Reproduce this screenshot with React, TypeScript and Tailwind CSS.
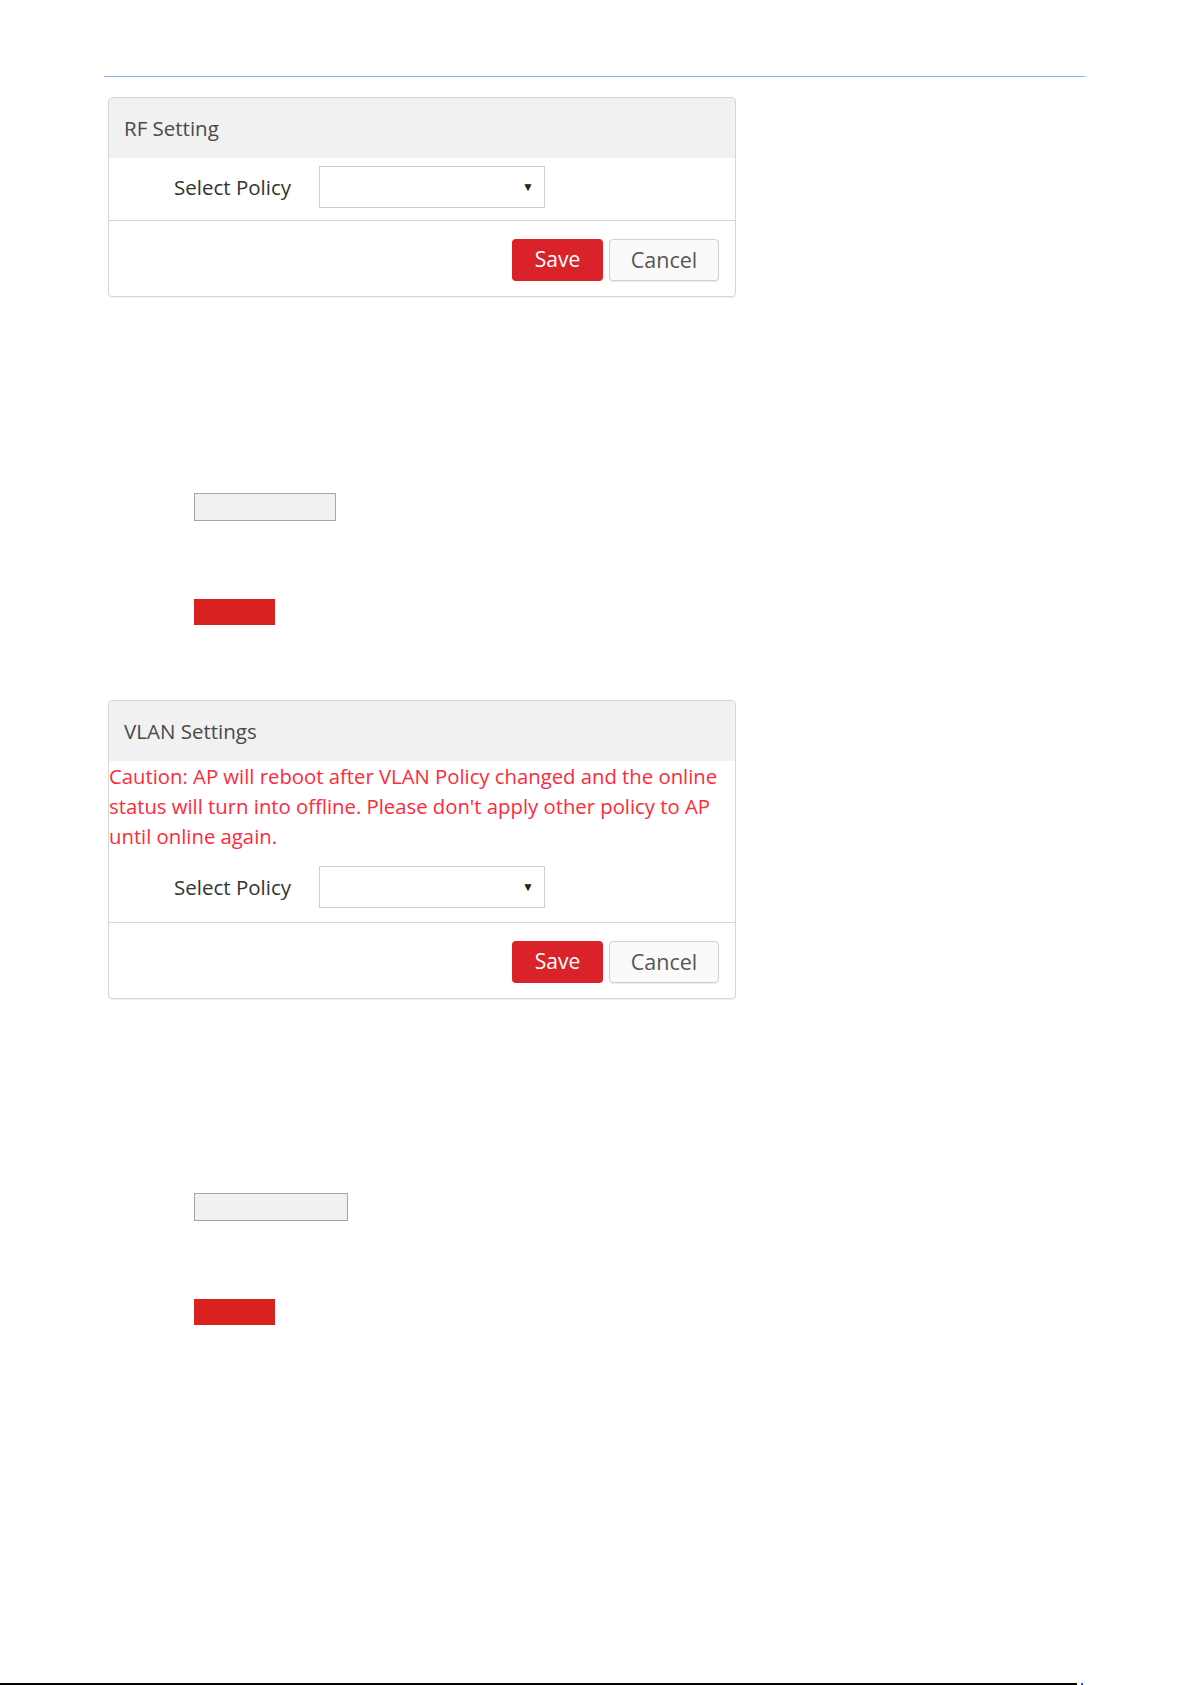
import React from 'react';

const font = { fontFamily: '"Open Sans", "Noto Sans", sans-serif' };

function PolicySelect() {
  return (
    <div className="relative w-[226px] h-[42px] border border-[#cfcfcf] bg-white">
      <span className="absolute right-[10px] top-[11px] text-[12px] text-[#222]">▼</span>
    </div>
  );
}

function Panel({ title, caution }: { title: string; caution?: boolean }) {
  return (
    <div className="ml-[108px] w-[628px] border border-[#d6d6d6] rounded-[4px] overflow-hidden shadow-[0_1px_1px_rgba(0,0,0,0.06)]">
      <div className="h-[60px] bg-[#f1f1f1] flex items-center px-[15px] text-[20.5px] text-[#4a4a4a]">
        {title}
      </div>
      {caution && (
        <div className="text-[20.3px] leading-[30px] text-[#ff2a3a] whitespace-nowrap">
          Caution: AP will reboot after VLAN Policy changed and the online
          <br />
          status will turn into offline. Please don't apply other policy to AP
          <br />
          until online again.
        </div>
      )}
      <div className={`flex items-center ${caution ? 'pt-[15px] pb-[14px]' : 'pt-[8px] pb-[12px]'}`}>
        <div className="w-[182px] text-right text-[20.5px] text-[#333]">Select Policy</div>
        <div className="ml-[28px]">
          <PolicySelect />
        </div>
      </div>
      <div className="border-t border-[#d6d6d6] flex justify-end gap-[6px] pt-[18px] pb-[15px] pr-[16px]">
        <button className="w-[91px] h-[42px] rounded-[4px] bg-[#d9222a] text-white text-[21px]">Save</button>
        <button className="w-[110px] h-[42px] rounded-[4px] bg-[#fafafa] border border-[#d0d0d0] text-[#555] text-[21.5px] shadow-[0_1px_1px_rgba(0,0,0,0.08)]">
          Cancel
        </button>
      </div>
    </div>
  );
}

export default function App() {
  return (
    <div className="w-[1192px] h-[1685px] bg-white overflow-hidden" style={font}>
      <div className="pt-[76px]">
        <div className="ml-[104px] w-[981px] h-px bg-[#80b3e8]" />
      </div>
      <div className="mt-[20px]">
        <Panel title="RF Setting" />
      </div>
      <div className="ml-[194px] mt-[196px] w-[142px] h-[28px] border border-[#a6a6a6] bg-[#f1f1f1]" />
      <div className="ml-[194px] mt-[78px] w-[81px] h-[26px] bg-[#d92120]" />
      <div className="mt-[75px]">
        <Panel title="VLAN Settings" caution />
      </div>
      <div className="ml-[194px] mt-[194px] w-[154px] h-[28px] border border-[#a6a6a6] bg-[#f1f1f1]" />
      <div className="ml-[194px] mt-[78px] w-[81px] h-[26px] bg-[#d92120]" />
      <div className="mt-[358px] flex items-center">
        <div className="w-[1077px] h-[2px] bg-black" />
        <div className="ml-[4px] w-[2px] h-[2px] bg-[#3344ff]" />
      </div>
    </div>
  );
}
